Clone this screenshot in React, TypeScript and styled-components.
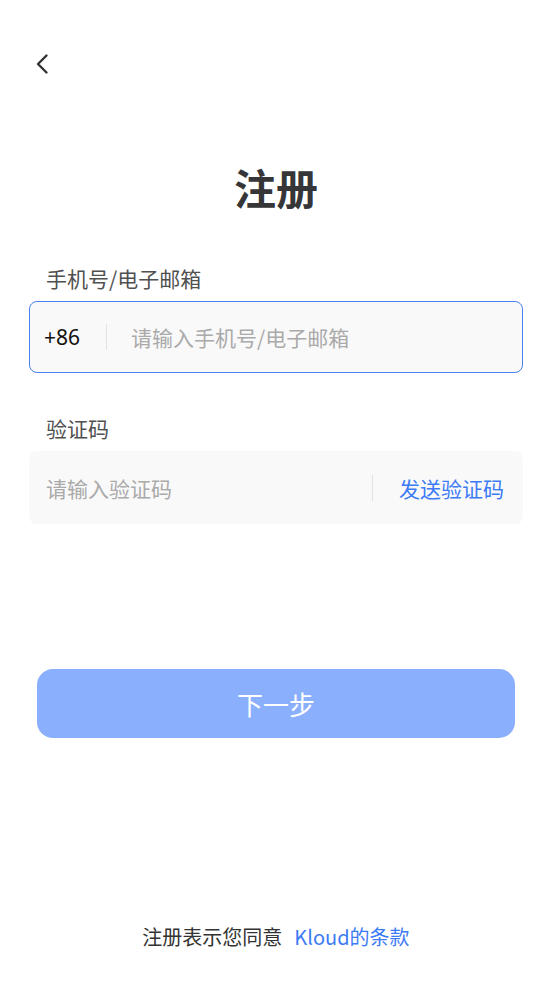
import React from "react";
import styled, { createGlobalStyle } from "styled-components";

const GlobalStyle = createGlobalStyle`
  html, body {
    margin: 0;
    padding: 0;
    background: #ffffff;
  }
  body {
    font-family: "Noto Sans CJK SC", "Noto Sans", sans-serif;
  }
  * { box-sizing: border-box; }
`;

const Page = styled.div`
  min-height: 100vh;
  display: flex;
  flex-direction: column;
  background: #ffffff;
`;

const Header = styled.header`
  display: flex;
  align-items: center;
  padding: 42px 0 0 20px;
`;

const BackButton = styled.button`
  width: 44px;
  height: 44px;
  display: flex;
  align-items: center;
  justify-content: center;
  border: none;
  background: transparent;
  padding: 0;
  color: #333333;
  cursor: pointer;
`;

const Title = styled.h1`
  margin: 71px 0 0;
  text-align: center;
  font-size: 42px;
  line-height: 60px;
  font-weight: 700;
  color: #363638;
`;

const Form = styled.form`
  display: flex;
  flex-direction: column;
  padding: 0 29px;
  margin-top: 46px;
`;

const Label = styled.label<{ $top?: number }>`
  display: block;
  margin-top: ${(p) => p.$top ?? 0}px;
  padding-left: 17px;
  font-size: 21px;
  line-height: 30px;
  color: #505050;
`;

const Field = styled.div<{ $focused?: boolean }>`
  margin-top: 8px;
  height: ${(p) => (p.$focused ? 72 : 73)}px;
  display: flex;
  align-items: center;
  border-radius: 8px;
  background: #f9f9f9;
  border: 1.5px solid ${(p) => (p.$focused ? "#4a80f1" : "transparent")};
`;

const Prefix = styled.span`
  width: 62px;
  margin-left: 14px;
  font-size: 21px;
  color: #111111;
  font-family: "Noto Sans", "Noto Sans CJK SC", sans-serif;
`;

const Divider = styled.span`
  width: 1px;
  height: 26px;
  background: #e3e3e3;
  flex: none;
`;

const Input = styled.input<{ $indent: number }>`
  flex: 1;
  min-width: 0;
  height: 100%;
  border: none;
  outline: none;
  background: transparent;
  padding: 0 0 0 ${(p) => p.$indent}px;
  font-family: "Noto Sans CJK SC", "Noto Sans", sans-serif;
  font-size: 21px;
  color: #222222;
  &::placeholder {
    color: #aaaaaa;
  }
`;

const SendCode = styled.button`
  border: none;
  background: transparent;
  padding: 0 18px 0 26px;
  font-family: "Noto Sans CJK SC", sans-serif;
  font-size: 21px;
  color: #3d7bf5;
  cursor: pointer;
`;

const NextButton = styled.button`
  margin: 145px 8px 0;
  height: 69px;
  border: none;
  border-radius: 16px;
  background: #8aaffc;
  color: #ffffff;
  font-family: "Noto Sans CJK SC", sans-serif;
  font-size: 26px;
  cursor: pointer;
`;

const Footer = styled.footer`
  margin-top: auto;
  padding-bottom: 29px;
  display: flex;
  justify-content: center;
  gap: 12px;
  font-size: 20px;
  line-height: 30px;
  color: #333333;
`;

const Link = styled.a`
  color: #3d7bf5;
  text-decoration: none;
`;

export default function App() {
  return (
    <Page>
      <GlobalStyle />
      <Header>
        <BackButton aria-label="返回">
          <svg width="24" height="24" viewBox="0 0 24 24" fill="none">
            <path
              d="M16.5 3.5 L8 12 L16.5 20.5"
              stroke="currentColor"
              strokeWidth="2.4"
              strokeLinecap="round"
              strokeLinejoin="round"
            />
          </svg>
        </BackButton>
      </Header>
      <Title>注册</Title>
      <Form onSubmit={(e) => e.preventDefault()}>
        <Label>手机号/电子邮箱</Label>
        <Field $focused>
          <Prefix>+86</Prefix>
          <Divider />
          <Input $indent={24} placeholder="请输入手机号/电子邮箱" />
        </Field>
        <Label $top={40}>验证码</Label>
        <Field>
          <Input $indent={16} placeholder="请输入验证码" />
          <Divider />
          <SendCode type="button">发送验证码</SendCode>
        </Field>
        <NextButton type="submit">下一步</NextButton>
      </Form>
      <Footer>
        <span>注册表示您同意</span>
        <Link href="#">Kloud的条款</Link>
      </Footer>
    </Page>
  );
}
